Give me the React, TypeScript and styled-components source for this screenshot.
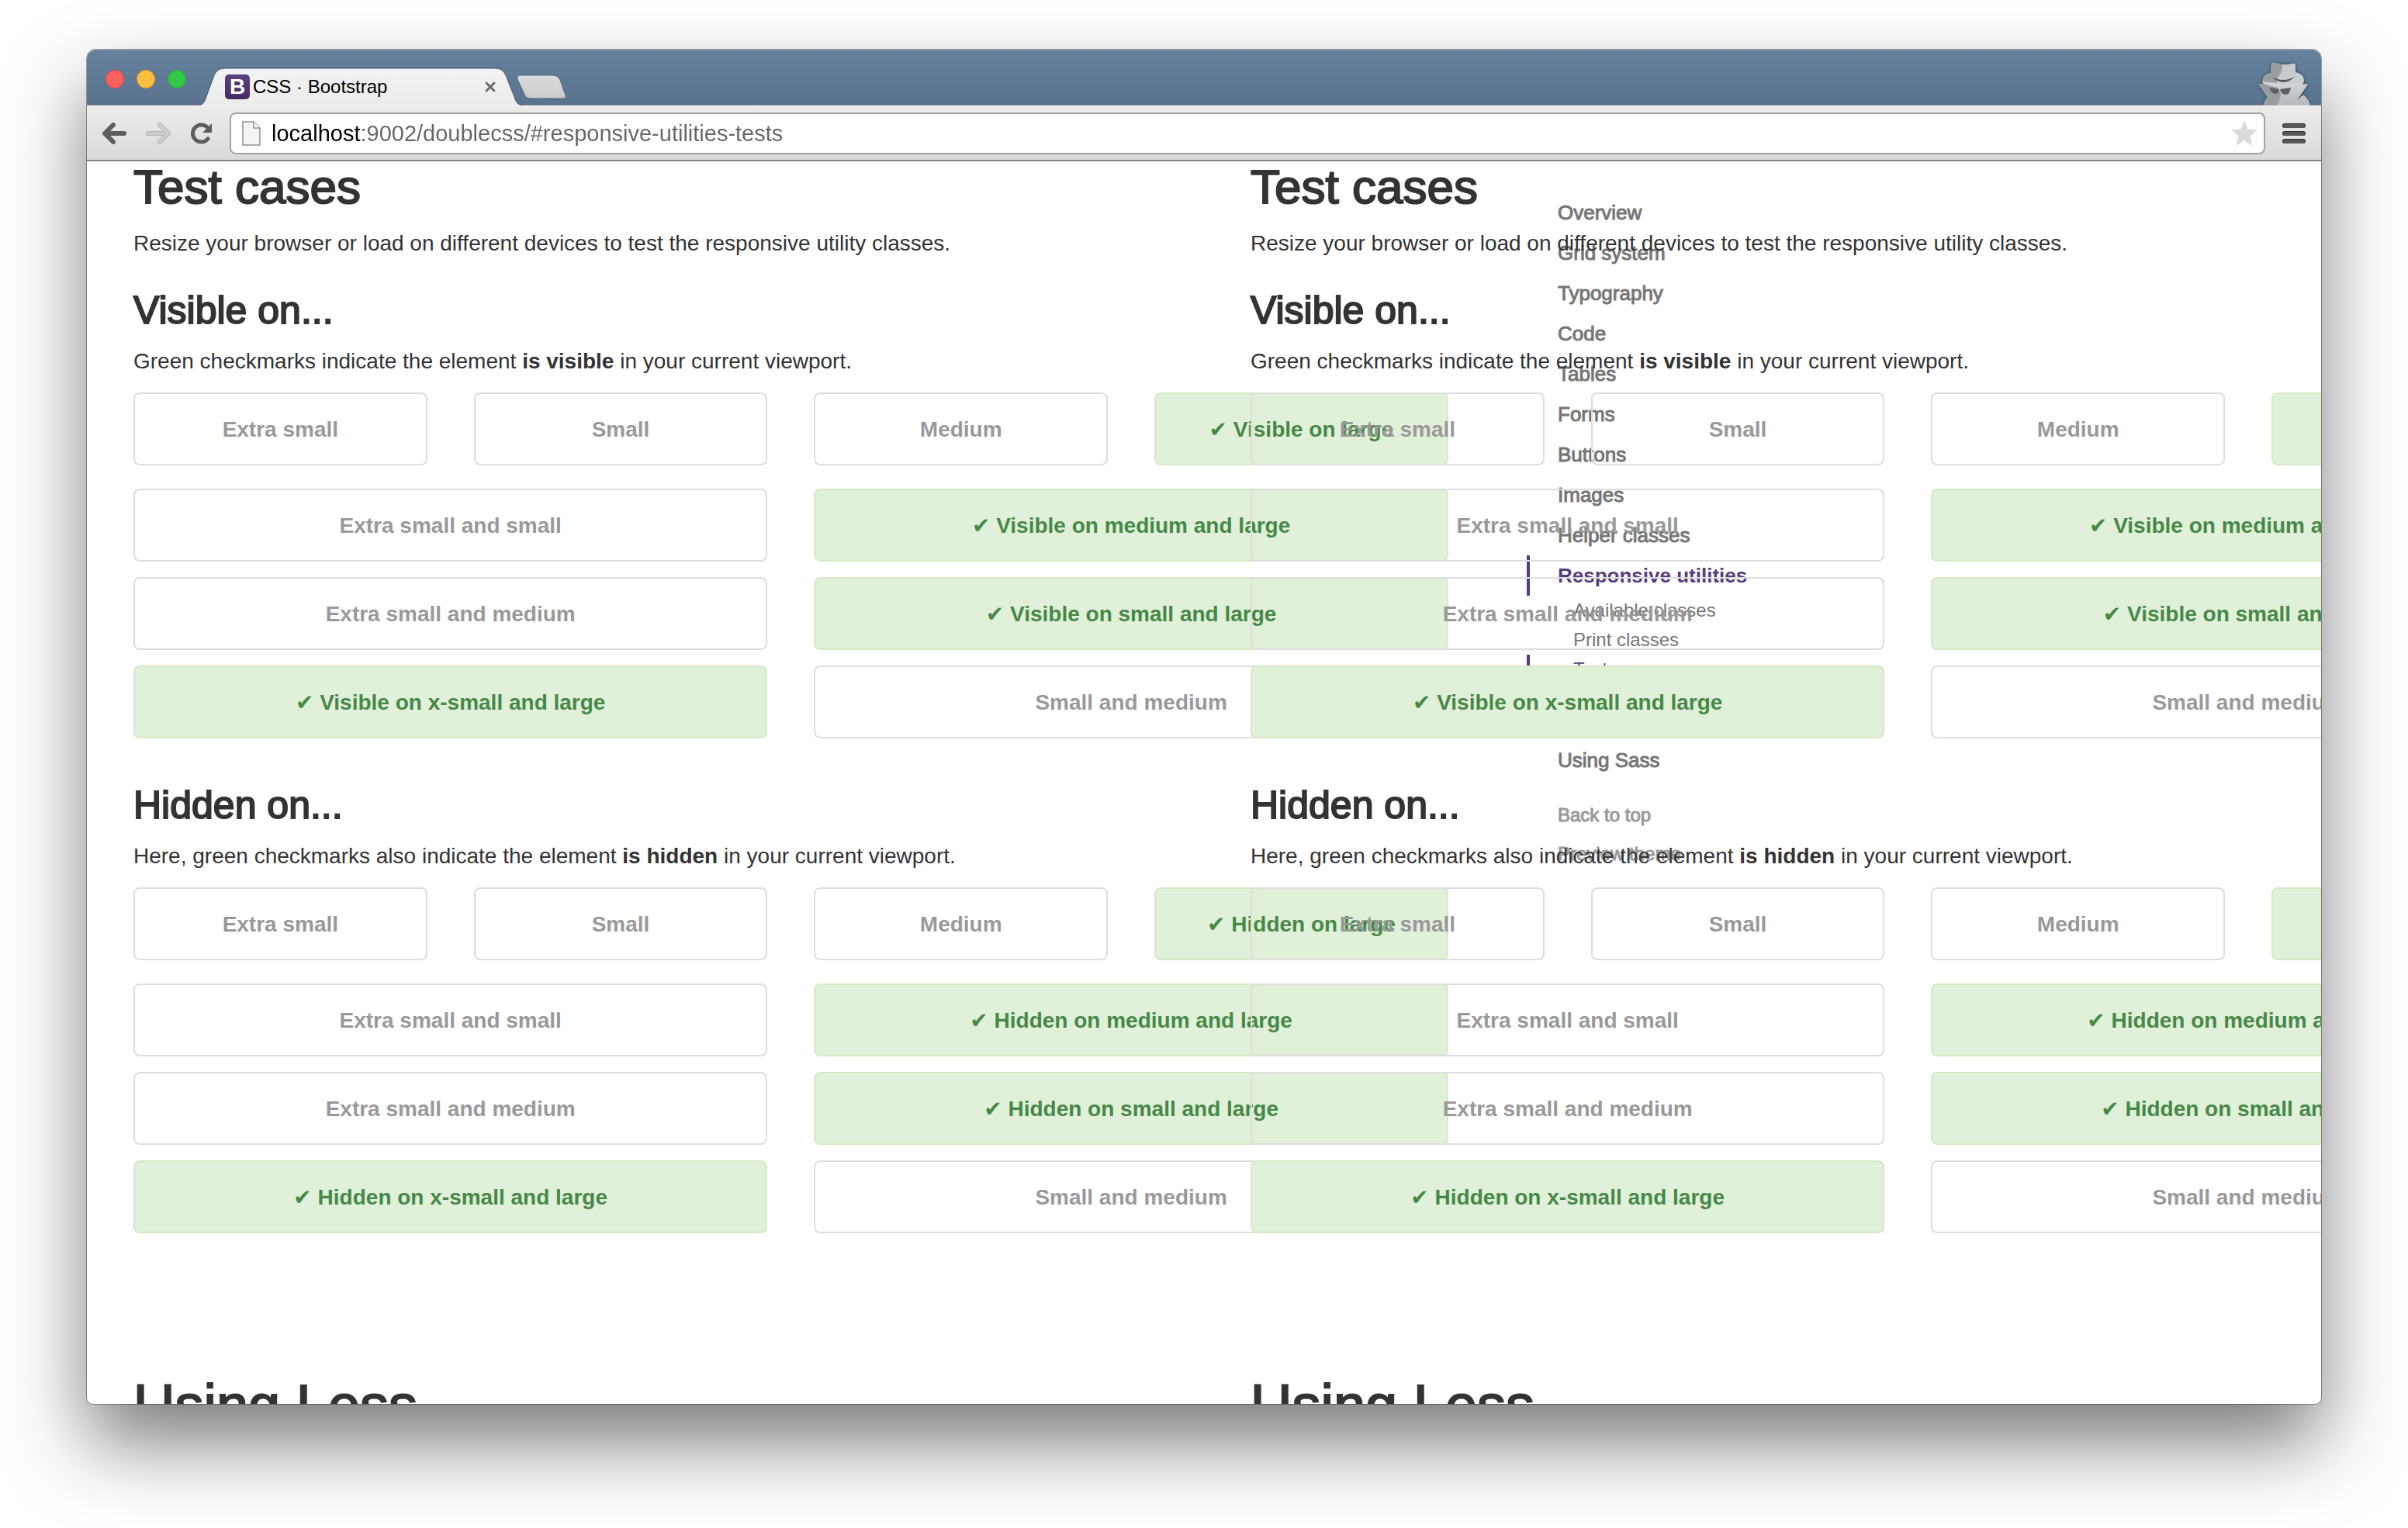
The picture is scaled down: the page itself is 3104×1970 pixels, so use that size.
import React from "react";
import styled, { createGlobalStyle } from "styled-components";

const GlobalStyle = createGlobalStyle`
  *, *::before, *::after { box-sizing: border-box; }
  body {
    margin: 0;
    background: #fff;
    color: #333;
    font-family: "Liberation Sans", "DejaVu Sans", sans-serif;
    font-size: 28px;
    line-height: 40px;
  }
  button, input { font: inherit; border: 0; padding: 0; background: none; }
  ul { list-style: none; margin: 0; padding: 0; }
`;

const Desktop = styled.div`
  display: flex;
  height: 100vh;
  padding: 64px 112px 160px;
`;

const BrowserWindow = styled.div`
  flex: 1;
  min-width: 0;
  display: flex;
  flex-direction: column;
  overflow: hidden;
  background: #fff;
  border-radius: 12px 12px 8px 8px;
  box-shadow: 0 0 0 1px rgba(0, 0, 0, 0.35), 0 50px 100px rgba(0, 0, 0, 0.52);
`;

/* ---------- browser chrome ---------- */

const TitleBar = styled.header`
  flex: none;
  display: flex;
  align-items: flex-end;
  height: 72px;
  padding: 0 12px 0 24px;
  background: linear-gradient(#66819d, #5a7490);
  box-shadow: inset 0 2px #6f88a2, inset 0 -1px #78838d;
`;

const Lights = styled.div`
  display: flex;
  gap: 16px;
  padding-bottom: 22px;
  margin-right: 16px;
`;

const Light = styled.button<{ $fill: string; $rim: string }>`
  width: 24px;
  height: 24px;
  border-radius: 50%;
  background: ${(p) => p.$fill};
  border: 1px solid ${(p) => p.$rim};
`;

const Tab = styled.div`
  position: relative;
  display: flex;
  align-items: center;
  width: 420px;
  height: 49px;
  padding: 0 36px 0 34px;
  color: #000;
  font-size: 24px;
  line-height: 30px;
`;

const TabShape = styled.svg`
  position: absolute;
  inset: 0;
`;

const Favicon = styled.span`
  position: relative;
  display: grid;
  place-items: center;
  width: 32px;
  height: 32px;
  margin-right: 4px;
  border-radius: 5px;
  background: linear-gradient(#5b4282, #452c63);
  color: #fff;
  font-size: 28px;
  font-weight: 700;
`;

const TabTitle = styled.span`
  position: relative;
  flex: 1;
`;

const IconButton = styled.button`
  position: relative;
  flex: none;
  display: grid;
  place-items: center;
`;

const NewTab = styled(IconButton)`
  align-self: flex-end;
  margin: 0 auto 8px -10px;
`;

const Toolbar = styled.div`
  flex: none;
  display: flex;
  align-items: center;
  gap: 20px;
  height: 72px;
  padding: 0 20px;
  background: linear-gradient(#ececec, #dadada);
  border-top: 1px solid #f8f8f8;
  border-bottom: 2px solid #808080;
`;

const NavButtons = styled.div`
  display: flex;
  gap: 24px;
`;

const AddressBar = styled.form`
  flex: 1;
  display: flex;
  align-items: center;
  height: 54px;
  padding: 0 8px 0 14px;
  background: #fff;
  border: 2px solid #a3a3a3;
  border-radius: 8px;
`;

const AddressInput = styled.input`
  flex: 1;
  min-width: 0;
  margin-left: 14px;
  outline: 0;
  color: #666;
  font-size: 29px;
  line-height: 40px;
  background: linear-gradient(to right, #000 115px, #666 115px);
  -webkit-background-clip: text;
  background-clip: text;
  -webkit-text-fill-color: transparent;
`;

/* ---------- documentation page ---------- */

const Viewport = styled.main`
  flex: 1;
  position: relative;
  display: grid;
  grid-template-columns: 1fr 1fr;
  align-items: start;
  min-height: 0;
  overflow: hidden;
`;

const Article = styled.article`
  position: relative;
  width: calc(122% - 62px);
  margin-left: 60px;
`;

const mediumHeading = `
  font-weight: 400;
  -webkit-text-stroke: 2px currentColor;
`;

const mediumText = `
  font-weight: 400;
  -webkit-text-stroke: 1px currentColor;
`;

const SectionTitle = styled.h2`
  margin: 0 0 20px;
  font-size: 62px;
  line-height: 66px;
  ${mediumHeading}
`;

const GroupTitle = styled.h3`
  margin: 40px 0 20px;
  font-size: 50px;
  line-height: 52px;
  ${mediumHeading}
`;

const ChapterTitle = styled.h1`
  margin: 182px 0 0;
  font-size: 74px;
  line-height: 79px;
  ${mediumHeading}
`;

const Paragraph = styled.p`
  margin: 0 0 20px;
`;

const Group = styled.section`
  & + & { padding-top: 20px; }
`;

const TestRow = styled.div<{ $columns: number }>`
  display: grid;
  grid-template-columns: repeat(${(p) => p.$columns}, 1fr);
  column-gap: 60px;
  margin-bottom: ${(p) => (p.$columns === 4 ? 30 : 20)}px;
  &:last-child { margin-bottom: 0; }
`;

const TestCell = styled.span<{ $on: boolean }>`
  padding: 26px 20px 24px;
  border: 2px solid ${(p) => (p.$on ? "#d6e9c6" : "#ddd")};
  border-radius: 8px;
  background: ${(p) => (p.$on ? "#e0f0d9" : "transparent")};
  color: ${(p) => (p.$on ? "#468847" : "#999")};
  font-weight: 700;
  text-align: center;
  white-space: nowrap;
`;

const Sidebar = styled.nav`
  position: absolute;
  top: 40px;
  left: calc(50% + 416px);
`;

const SubNav = styled.ul`
  padding-bottom: 20px;
`;

const SideLink = styled.a<{ $active?: boolean }>`
  display: block;
  padding: 8px 40px;
  font-size: 26px;
  line-height: 36px;
  color: #767676;
  text-decoration: none;
  ${mediumText}
  ${(p) =>
    p.$active &&
    `
    padding-left: 36px;
    border-left: 4px solid #563d7c;
    color: #563d7c;
    font-weight: 700;
    -webkit-text-stroke: 0;
  `}
`;

const SubLink = styled.a<{ $active?: boolean }>`
  display: block;
  padding: 2px 60px;
  font-size: 24px;
  line-height: 34px;
  color: #767676;
  text-decoration: none;
  ${(p) =>
    p.$active &&
    `
    padding-left: 56px;
    border-left: 4px solid #563d7c;
    color: #563d7c;
  `}
`;

const FooterLinks = styled.div`
  padding-top: 20px;
`;

const FooterLink = styled.a`
  display: block;
  padding: 8px 40px;
  font-size: 24px;
  line-height: 34px;
  color: #999;
  text-decoration: none;
  ${mediumText}
`;

type Test = { label: string; on?: boolean };

const testRows = (word: string): Test[][] => [
  [
    { label: "Extra small" },
    { label: "Small" },
    { label: "Medium" },
    { label: `${word} on large`, on: true },
  ],
  [{ label: "Extra small and small" }, { label: `${word} on medium and large`, on: true }],
  [{ label: "Extra small and medium" }, { label: `${word} on small and large`, on: true }],
  [{ label: `${word} on x-small and large`, on: true }, { label: "Small and medium" }],
];

const TestGrid = ({ word }: { word: string }) => (
  <div>
    {testRows(word).map((row, i) => (
      <TestRow key={i} $columns={row.length}>
        {row.map((t) => (
          <TestCell key={t.label} $on={!!t.on}>
            {t.on ? `✔ ${t.label}` : t.label}
          </TestCell>
        ))}
      </TestRow>
    ))}
  </div>
);

const DocArticle = () => (
  <Article>
    <SectionTitle>Test cases</SectionTitle>
    <Paragraph>
      Resize your browser or load on different devices to test the responsive utility classes.
    </Paragraph>
    <Group>
      <GroupTitle>Visible on...</GroupTitle>
      <Paragraph>
        Green checkmarks indicate the element <strong>is visible</strong> in your current viewport.
      </Paragraph>
      <TestGrid word="Visible" />
    </Group>
    <Group>
      <GroupTitle>Hidden on...</GroupTitle>
      <Paragraph>
        Here, green checkmarks also indicate the element <strong>is hidden</strong> in your current
        viewport.
      </Paragraph>
      <TestGrid word="Hidden" />
    </Group>
    <ChapterTitle>Using Less</ChapterTitle>
  </Article>
);

const chapters = [
  "Overview",
  "Grid system",
  "Typography",
  "Code",
  "Tables",
  "Forms",
  "Buttons",
  "Images",
  "Helper classes",
  "Responsive utilities",
  "Using Less",
  "Using Sass",
];
const subChapters = ["Available classes", "Print classes", "Test cases"];

const DocSidebar = () => (
  <Sidebar>
    <ul>
      {chapters.map((c) => {
        const active = c === "Responsive utilities";
        return (
          <li key={c}>
            <SideLink href="#" $active={active}>
              {c}
            </SideLink>
            {active && (
              <SubNav>
                {subChapters.map((s) => (
                  <li key={s}>
                    <SubLink href="#" $active={s === "Test cases"}>
                      {s}
                    </SubLink>
                  </li>
                ))}
              </SubNav>
            )}
          </li>
        );
      })}
    </ul>
    <FooterLinks>
      <FooterLink href="#">Back to top</FooterLink>
      <FooterLink href="#">Preview theme</FooterLink>
    </FooterLinks>
  </Sidebar>
);

const agentOutline =
  "M20 6Q21 4 25 5Q36 9 47 6Q51 5 51 8V17Q61 19 62 27Q62 30 60 33L67 32L54 53Q60 44 63 48Q69 54 70 60H9Q11 54 15 49L3 32L9 32Q8 30 9 26Q11 19 19 18Z";

const Incognito = () => (
  <svg width="72" height="60" viewBox="0 0 72 60" aria-hidden="true">
    <defs>
      <linearGradient id="agentFill" x1="0" y1="0" x2="0" y2="1">
        <stop offset="0" stopColor="#c6cacd" />
        <stop offset="0.6" stopColor="#cbced0" />
        <stop offset="1" stopColor="#b4b8ba" />
      </linearGradient>
      <clipPath id="agentLeft">
        <path d="M0 0H34C35 12 33 18 27 26L27 36Q35 44 30 54L26 60H0Z" />
      </clipPath>
      <filter id="agentGlow" x="-20%" y="-20%" width="140%" height="140%">
        <feDropShadow dx="0" dy="0" stdDeviation="2" floodColor="#1c2e42" floodOpacity="0.9" />
      </filter>
    </defs>
    <path d={agentOutline} fill="url(#agentFill)" filter="url(#agentGlow)" />
    <g clipPath="url(#agentLeft)">
      <path d={agentOutline} fill="#999da0" />
    </g>
    <path d="M9 28Q13 31 20 30Q36 34 61 29L60 33Q36 42 10 32Z" fill="#d0d3d5" />
    <path d="M20 23Q35 31 50 23Q36 37 20 23Z" fill="#55595c" />
    <path d="M17 37L30 39Q29 45 25 45Q19 44 17 37Z" fill="#5c6063" />
    <path d="M31 39L45 37Q43 47 38 46Q32 45 31 39Z" fill="#5c6063" />
    <path d="M53 53L64 38L61 46Z" fill="#3f5268" />
  </svg>
);

const Chrome = () => (
  <>
    <TitleBar>
      <Lights>
        <Light aria-label="Close window" $fill="#fc605b" $rim="#e1443f" />
        <Light aria-label="Minimize window" $fill="#fdbe41" $rim="#e09c20" />
        <Light aria-label="Zoom window" $fill="#34c84a" $rim="#1fa832" />
      </Lights>
      <Tab>
        <TabShape width="420" height="49" viewBox="0 0 420 49" aria-hidden="true">
          <defs>
            <linearGradient id="tabFill" x1="0" y1="0" x2="0" y2="1">
              <stop offset="0" stopColor="#f3f3f3" />
              <stop offset="1" stopColor="#ececec" />
            </linearGradient>
          </defs>
          <path
            d="M0 49Q6 48 8 43L20 10Q24 1 34 1H382Q392 1 396 10L409 43Q411 48 418 49Z"
            fill="url(#tabFill)"
          />
          <path
            d="M0 49Q6 48 8 43L20 10Q24 1 34 1H382Q392 1 396 10L409 43Q411 48 418 49"
            fill="none"
            stroke="#3f536a"
            strokeWidth="1"
          />
        </TabShape>
        <Favicon aria-hidden="true">B</Favicon>
        <TabTitle>CSS · Bootstrap</TabTitle>
        <IconButton aria-label="Close tab">
          <svg width="16" height="16" viewBox="0 0 16 16">
            <path d="M3 3L13 13M13 3L3 13" stroke="#6b6b6b" strokeWidth="3" strokeLinecap="round" />
          </svg>
        </IconButton>
      </Tab>
      <NewTab aria-label="New tab">
        <svg width="64" height="32" viewBox="0 0 64 32">
          <defs>
            <linearGradient id="plusFill" x1="0" y1="0" x2="0" y2="1">
              <stop offset="0" stopColor="#dcdcdc" />
              <stop offset="1" stopColor="#cbcbcb" />
            </linearGradient>
          </defs>
          <path
            d="M4 1H46Q53 1 56 7L63 27Q64 31 60 31H19Q12 31 10 26L1 6Q0 1 4 1Z"
            fill="url(#plusFill)"
            stroke="#4d6279"
            strokeWidth="1"
          />
        </svg>
      </NewTab>
      <Incognito />
    </TitleBar>
    <Toolbar>
      <NavButtons>
        <IconButton aria-label="Back">
          <svg width="32" height="32" viewBox="0 0 32 32" fill="none">
            <path
              d="M14 5L3 16L14 27M4 16H28"
              stroke="#5d5d5d"
              strokeWidth="6"
              strokeLinecap="round"
              strokeLinejoin="round"
            />
          </svg>
        </IconButton>
        <IconButton aria-label="Forward">
          <svg width="32" height="32" viewBox="0 0 32 32" fill="none">
            <path
              d="M18 5L29 16L18 27M28 16H3"
              stroke="#b4b4b4"
              strokeWidth="6"
              strokeLinecap="round"
              strokeLinejoin="round"
            />
            <path
              d="M18 5L29 16L18 27M28 16H3"
              stroke="#cdcdcd"
              strokeWidth="4"
              strokeLinecap="round"
              strokeLinejoin="round"
            />
          </svg>
        </IconButton>
        <IconButton aria-label="Reload">
          <svg width="32" height="32" viewBox="0 0 32 32" fill="none">
            <path
              d="M24 23A11 11 0 1 1 23 8"
              stroke="#5d5d5d"
              strokeWidth="5"
              strokeLinecap="round"
            />
            <path d="M29 3V15H17Z" fill="#5d5d5d" />
          </svg>
        </IconButton>
      </NavButtons>
      <AddressBar onSubmit={(e) => e.preventDefault()}>
        <svg width="24" height="32" viewBox="0 0 24 32" aria-hidden="true">
          <path d="M1 1H15L23 9V31H1Z" fill="#f4f4f4" stroke="#8f8f8f" strokeWidth="1.5" />
          <path d="M15 1V9H23" fill="#fff" stroke="#8f8f8f" strokeWidth="1.5" />
        </svg>
        <AddressInput
          aria-label="Address"
          defaultValue="localhost:9002/doublecss/#responsive-utilities-tests"
        />
        <IconButton type="button" aria-label="Bookmark this page">
          <svg width="34" height="34" viewBox="0 0 34 34">
            <path
              d="M17 0L21.400 11.500L34 12.500L24.500 20.500L27.500 33L17 26L6.500 33L9.500 20.500L0 12.500L12.600 11.500Z"
              fill="#dadada"
            />
          </svg>
        </IconButton>
      </AddressBar>
      <IconButton aria-label="Menu">
        <svg width="32" height="32" viewBox="0 0 32 32">
          {[3, 13, 23].map((y) => (
            <g key={y}>
              <rect x="2" y={y} width="30" height="6" rx="3" fill="#2e2e2e" />
              <rect x="3" y={y + 1} width="28" height="5" rx="2" fill="#585858" />
            </g>
          ))}
        </svg>
      </IconButton>
    </Toolbar>
  </>
);

export default function App() {
  return (
    <>
      <GlobalStyle />
      <Desktop>
        <BrowserWindow>
          <Chrome />
          <Viewport>
            <DocArticle />
            <DocSidebar />
            <DocArticle />
          </Viewport>
        </BrowserWindow>
      </Desktop>
    </>
  );
}
